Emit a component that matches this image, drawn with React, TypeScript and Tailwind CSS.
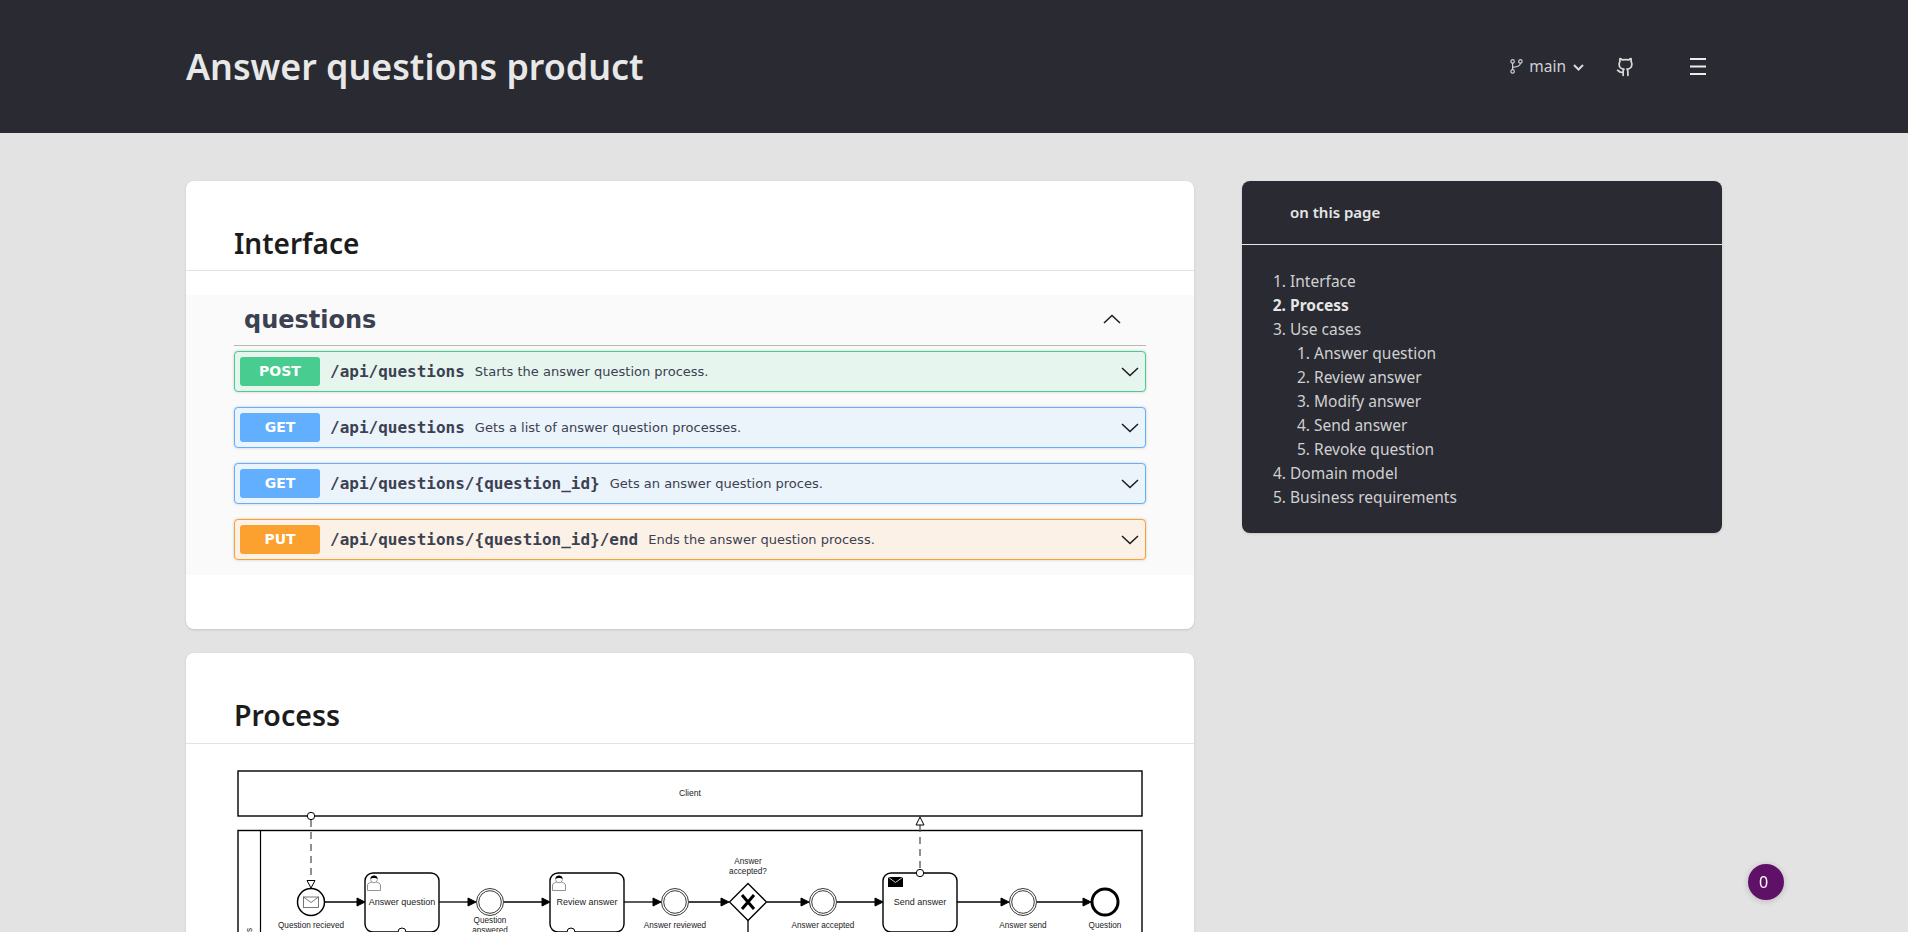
import React from "react";

const sans = "font-['Noto_Sans','Lato',sans-serif]";

type Op = { m: string; path: string; desc: string; row: string; badge: string };
const ops: Op[] = [
  { m: "POST", path: "/api/questions", desc: "Starts the answer question process.", row: "border-[#49cc90] bg-[#e7f5ef]", badge: "bg-[#49cc90]" },
  { m: "GET", path: "/api/questions", desc: "Gets a list of answer question processes.", row: "border-[#61affe] bg-[#ebf3fb]", badge: "bg-[#61affe]" },
  { m: "GET", path: "/api/questions/{question_id}", desc: "Gets an answer question proces.", row: "border-[#61affe] bg-[#ebf3fb]", badge: "bg-[#61affe]" },
  { m: "PUT", path: "/api/questions/{question_id}/end", desc: "Ends the answer question process.", row: "border-[#fca130] bg-[#fbf1e7]", badge: "bg-[#fca130]" },
];

function Chevron({ up = false, className = "" }: { up?: boolean; className?: string }) {
  return (
    <svg width={18} height={10} viewBox="0 0 18 10" className={className} fill="none" stroke="#1a1a1a" strokeWidth={1.5}>
      <path d={up ? "M1 9 L9 1.5 L17 9" : "M1 1 L9 8.5 L17 1"} />
    </svg>
  );
}

function BranchIcon() {
  return (
    <svg width={13} height={15} viewBox="0 0 13 15" fill="none" stroke="#d0d0d0" strokeWidth={1.2} className="mr-[6px]">
      <circle cx={2.6} cy={2.4} r={1.7} />
      <circle cx={2.6} cy={12.4} r={1.7} />
      <circle cx={10.4} cy={2.4} r={1.7} />
      <path d="M2.6 4.1 V10.7 M10.4 4.1 C10.4 7 8 7.6 2.6 8.4" />
    </svg>
  );
}

function GithubIcon() {
  return (
    <svg width={19} height={20} viewBox="0 0 24 24" preserveAspectRatio="none" fill="none" stroke="#d8d8d8" strokeWidth={2.2} strokeLinecap="round" strokeLinejoin="round" className="ml-[32px]">
      <path d="M15 22v-4a4.8 4.8 0 0 0-1-3.5c3 0 6-2 6-5.5.08-1.25-.27-2.48-1-3.5.28-1.15.28-2.35 0-3.5 0 0-1 0-3 1.5-2.64-.5-5.36-.5-8 0C6 2 5 2 5 2c-.3 1.15-.3 2.35 0 3.5A5.403 5.403 0 0 0 4 9c0 3.5 3 5.5 6 5.5-.39.49-.68 1.05-.85 1.65-.17.6-.22 1.23-.15 1.85v4" />
      <path d="M9 18c-4.51 2-5-2-7-2" />
    </svg>
  );
}

function MenuIcon() {
  return (
    <svg width={16} height={17} viewBox="0 0 16 17" stroke="#ececec" strokeWidth={2} className="ml-[55px]">
      <path d="M0 1 H16 M0 8.5 H16 M0 16 H16" />
    </svg>
  );
}

function Circle({ cx }: { cx: number }) {
  return (
    <g fill="#fff" stroke="#222">
      <circle cx={cx} cy={902} r={13.5} strokeWidth={0.9} />
      <circle cx={cx} cy={902} r={11.3} strokeWidth={0.9} />
    </g>
  );
}

function Arrow({ x1, x2 }: { x1: number; x2: number }) {
  return (
    <g>
      <line x1={x1} y1={902} x2={x2 - 7} y2={902} stroke="#000" strokeWidth={1.3} />
      <path d={`M${x2} 902 L${x2 - 8} 898 L${x2 - 8} 906 Z`} fill="#000" stroke="#000" />
    </g>
  );
}

function UserIcon({ x, y }: { x: number; y: number }) {
  return (
    <g transform={`translate(${x} ${y})`}>
      <path d="M0.5 15.5 V10 C0.5 8 4 7.5 4.8 7 H9.2 C10 7.5 13.5 8 13.5 10 V15.5 Z" fill="#fff" stroke="#777" strokeWidth={0.8} />
      <circle cx={7} cy={4.4} r={3.4} fill="#fff" stroke="#777" strokeWidth={0.7} />
      <path d="M3.4 4 C3.4 -0.6 10.6 -0.6 10.6 4 C8.8 2.6 5.2 2.6 3.4 4 Z" fill="#000" />
    </g>
  );
}

function Task({ x, label }: { x: number; label: string }) {
  return (
    <g>
      <rect x={x} y={873} width={74} height={59} rx={8} fill="#fff" stroke="#000" strokeWidth={1.4} />
      <text x={x + 37} y={905} textAnchor="middle" fontSize={9} fill="#222">{label}</text>
    </g>
  );
}

function Label({ x, y, t }: { x: number; y: number; t: string }) {
  return <text x={x} y={y} textAnchor="middle" fontSize={8.2} fill="#222">{t}</text>;
}

function Diagram() {
  return (
    <svg width={912} height={300} viewBox="234 765 912 300" className="block font-['Liberation_Sans',sans-serif]">
      <rect x={238} y={771} width={904} height={45} fill="#fff" stroke="#000" strokeWidth={1.4} />
      <text x={690} y={796} textAnchor="middle" fontSize={8.6} fill="#222">Client</text>
      <rect x={238} y={830.5} width={904} height={230} fill="#fff" stroke="#000" strokeWidth={1.4} />
      <line x1={260.5} y1={830} x2={260.5} y2={1060} stroke="#000" strokeWidth={1.2} />
      <text transform="translate(252 928) rotate(-90)" textAnchor="end" fontSize={8.2} fill="#222">Questions</text>

      <line x1={311} y1={820} x2={311} y2={880} stroke="#555" strokeWidth={1.3} strokeDasharray="7 5" />
      <circle cx={311} cy={816} r={3.7} fill="#fff" stroke="#000" />
      <path d="M307 880.5 H315 L311 888 Z" fill="#fff" stroke="#000" />
      <circle cx={311} cy={902} r={13.5} fill="#fff" stroke="#000" strokeWidth={1.5} />
      <rect x={303.5} y={897} width={15} height={10.5} fill="#fff" stroke="#555" strokeWidth={0.8} />
      <path d="M303.5 897 L311 902.5 L318.5 897" fill="none" stroke="#555" strokeWidth={0.8} />

      <Arrow x1={325} x2={365} />
      <Task x={365} label="Answer question" />
      <UserIcon x={367} y={875} />
      <Arrow x1={439} x2={476} />
      <Circle cx={490} />
      <Arrow x1={504} x2={550} />
      <Task x={550} label="Review answer" />
      <UserIcon x={552} y={875} />
      <Arrow x1={624} x2={661} />
      <Circle cx={675} />
      <Arrow x1={689} x2={729} />

      <path d="M748 883.5 L766.5 902 L748 920.5 L729.5 902 Z" fill="#fff" stroke="#000" strokeWidth={1.3} />
      <path d="M742 895 L754 909 M754 895 L742 909" stroke="#000" strokeWidth={3} />
      <line x1={748} y1={920.5} x2={748} y2={960} stroke="#000" strokeWidth={1.3} />
      <Arrow x1={767} x2={809} />
      <Circle cx={823} />
      <Arrow x1={837} x2={883} />
      <Task x={883} label="Send answer" />
      <rect x={888} y={877} width={15} height={10} fill="#000" />
      <path d="M888 877 L895.5 882.5 L903 877" fill="none" stroke="#fff" strokeWidth={0.8} />
      <line x1={920} y1={825} x2={920} y2={869} stroke="#555" strokeWidth={1.3} strokeDasharray="7 5" />
      <path d="M920 817 L924 825 H916 Z" fill="#fff" stroke="#000" />
      <circle cx={920} cy={873} r={3.7} fill="#fff" stroke="#000" />
      <Arrow x1={957} x2={1009} />
      <Circle cx={1023} />
      <Arrow x1={1037} x2={1091} />
      <circle cx={1105} cy={902} r={13} fill="#fff" stroke="#000" strokeWidth={3} />

      <circle cx={402} cy={932} r={4} fill="#fff" stroke="#000" />
      <circle cx={571} cy={932} r={4} fill="#fff" stroke="#000" />

      <Label x={311} y={928} t="Question recieved" />
      <Label x={490} y={923} t="Question" />
      <Label x={490} y={933} t="answered" />
      <Label x={675} y={928} t="Answer reviewed" />
      <Label x={748} y={864} t="Answer" />
      <Label x={748} y={874} t="accepted?" />
      <Label x={823} y={928} t="Answer accepted" />
      <Label x={1023} y={928} t="Answer send" />
      <Label x={1105} y={928} t="Question" />
      <Label x={1105} y={939} t="answered" />
    </svg>
  );
}

function Toc() {
  const sub = ["Answer question", "Review answer", "Modify answer", "Send answer", "Revoke question"];
  return (
    <ol className="list-decimal pl-[48px] pr-6 pt-[24px] pb-[24px] text-[15.5px] leading-[24px] text-[#d0d0d0]">
      <li>Interface</li>
      <li className="font-bold text-[#e6e6e6]">Process</li>
      <li>
        Use cases
        <ol className="list-decimal pl-[24px]">
          {sub.map((s) => <li key={s}>{s}</li>)}
        </ol>
      </li>
      <li>Domain model</li>
      <li>Business requirements</li>
    </ol>
  );
}

export default function App() {
  return (
    <div className={`h-screen overflow-hidden bg-[#e3e3e3] ${sans}`}>
      <header className="h-[133px] bg-[#292a32]">
        <div className="mx-auto flex h-full w-[1536px] items-center justify-between">
          <h1 className="text-[35.8px] font-semibold text-[#e8e8e8]">Answer questions product</h1>
          <div className="flex items-center pr-[16px] text-[#d0d0d0]">
            <BranchIcon />
            <span className="text-[15.5px]">main</span>
            <svg width={11} height={7} viewBox="0 0 11 7" fill="none" stroke="#d8d8d8" strokeWidth={2} className="ml-[7px] mt-[2px]">
              <path d="M1 1 L5.5 5.5 L10 1" />
            </svg>
            <GithubIcon />
            <MenuIcon />
          </div>
        </div>
      </header>

      <main className="mx-auto flex w-[1536px] items-start gap-[48px] pt-[48px]">
        <div className="flex w-[1008px] shrink-0 flex-col gap-[24px]">
          <section className="h-[448px] rounded-[8px] bg-white shadow-sm">
            <h2 className="flex h-[90px] items-end border-b border-[#e2e2e2] px-[48px] pb-[6px] text-[28px] font-semibold text-[#1c1c1c]">Interface</h2>
            <div className="mt-[24px] bg-[#fafafa] px-[48px] pb-[15px] font-['DejaVu_Sans',sans-serif] text-[#3b4151]">
              <div className="flex h-[51px] items-center justify-between border-b border-[#b8b8b8] pb-[1px] pl-[10px] pr-[25px]">
                <span className="text-[24px] font-bold">questions</span>
                <Chevron up className="-mt-[2px]" />
              </div>
              <div className="mt-[5px] flex flex-col gap-[15px]">
                {ops.map((o, i) => (
                  <div key={i} className={`flex h-[41px] items-center rounded-[4px] border pl-[5px] pr-[6px] shadow-[0_0_3px_rgba(0,0,0,0.19)] ${o.row}`}>
                    <span className={`flex h-[29px] w-[80px] shrink-0 items-center justify-center rounded-[3px] text-[14px] font-bold text-white ${o.badge}`}>{o.m}</span>
                    <span className="ml-[10px] font-['DejaVu_Sans_Mono',monospace] text-[16px] font-bold">{o.path}</span>
                    <span className="ml-[10px] text-[13px]">{o.desc}</span>
                    <Chevron className="ml-auto" />
                  </div>
                ))}
              </div>
            </div>
          </section>

          <section className="rounded-[8px] bg-white shadow-sm">
            <h2 className="flex h-[91px] items-end border-b border-[#e2e2e2] px-[48px] pb-[6px] text-[28.5px] font-semibold text-[#1c1c1c]">Process</h2>
            <div className="px-[48px] pt-[21px]">
              <Diagram />
            </div>
          </section>
        </div>

        <aside className="w-[480px] shrink-0 rounded-[8px] bg-[#292a32] shadow-sm">
          <div className="flex h-[64px] items-center border-b border-[#e6e6e6] pb-[1px] pl-[48px] text-[15px] font-semibold text-[#e6e6e6]">on this page</div>
          <Toc />
        </aside>
      </main>

      <div className="fixed left-[1748px] top-[864px] flex h-[36px] w-[36px] items-center justify-center rounded-full bg-[#5f1168] pb-[1px] pr-[5px] text-[16px] text-white shadow-[0_1px_6px_rgba(0,0,0,0.2)]">0</div>
    </div>
  );
}
